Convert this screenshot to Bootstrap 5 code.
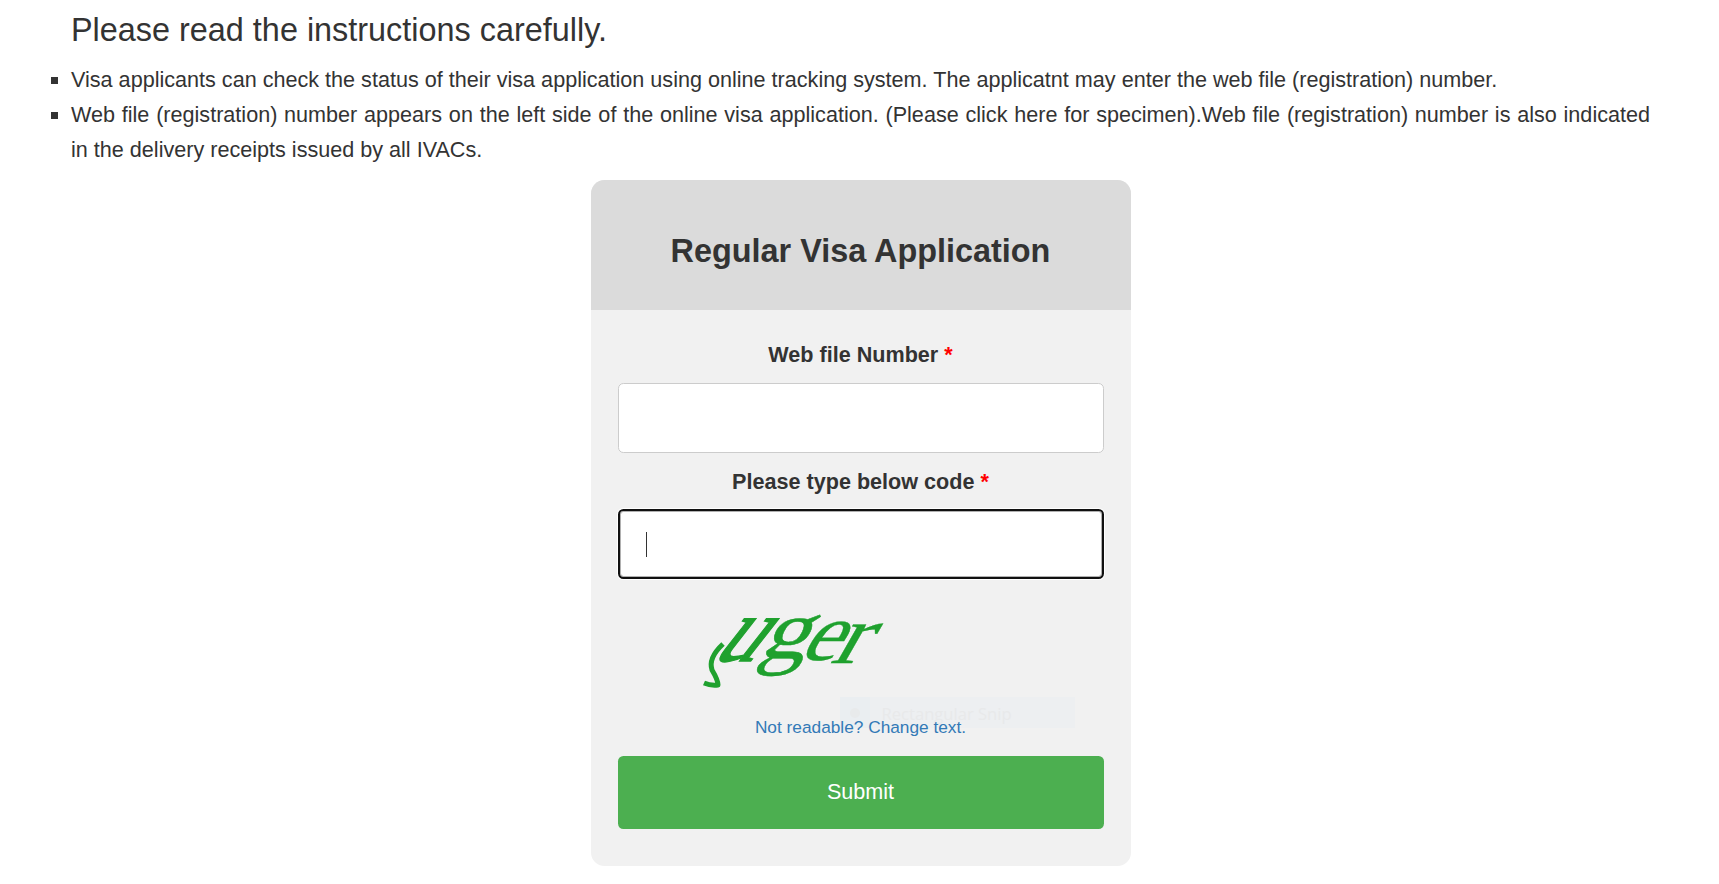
<!DOCTYPE html>
<html lang="en">
<head>
    <meta charset="UTF-8">
    <meta name="viewport" content="width=device-width, initial-scale=1.0">
    <title>Regular Visa Application</title>
    <link href="https://cdn.jsdelivr.net/npm/bootstrap@5.3.0/dist/css/bootstrap.min.css" rel="stylesheet">
    <style>
        body {
            font-family: "Liberation Sans", Arial, sans-serif;
            font-size: 21.6px;
            line-height: 35px;
            color: #333;
            background: #fff;
        }
        .page-wrap {
            padding: 12px 69px 0 71px;
        }
        .page-title {
            font-size: 32.4px;
            line-height: 36px;
            font-weight: 400;
            margin-bottom: 14px;
        }
        .instructions {
            list-style: square;
            text-align: justify;
            margin-bottom: 13px;
        }
        .visa-card {
            width: 540px;
            height: 686px;
            border: 0;
            border-radius: 13.5px;
            background: #f1f1f1;
            color: #333;
        }
        .visa-header {
            height: 130px;
            padding-top: 12px;
            border-radius: 13.5px 13.5px 0 0;
            background: #dbdbdb;
        }
        .visa-header h2 {
            font-size: 32.4px;
            font-weight: 700;
        }
        .visa-body {
            padding: 27px;
        }
        .field-label {
            font-weight: 700;
            margin-bottom: 11px;
        }
        .code-label {
            margin: 11px 0 10px;
        }
        .req {
            color: #f00;
        }
        .visa-input {
            height: 70px;
            padding: 16px 27px;
            font-size: 21.6px;
            border: 1px solid #ccc;
            border-radius: 5.4px;
            background: #fff;
        }
        .visa-input.active {
            border: 2px solid #101010;
            box-shadow: 0 0 0 1px #fff, inset 0 0 0 1px #b0b0b0;
        }
        .caret {
            left: 28px;
            top: 23px;
            width: 1px;
            height: 25px;
            background: #333;
        }
        .captcha {
            height: 120px;
            margin: 11px 0 0 62px;
            overflow: visible;
        }
        .captcha text {
            font-family: "Liberation Serif", serif;
            fill: #1fa12e;
            stroke: #1fa12e;
        }
        .change-text {
            font-size: 17.28px;
            line-height: 24px;
            margin-top: 5px;
            color: #337ab7;
        }
        .snip-ghost {
            left: 249px;
            top: 517px;
            width: 235px;
            height: 31px;
            background: #edeff1;
            font-family: "Open Sans", sans-serif;
            font-size: 16.6px;
            line-height: 33px;
            color: #e8e9ea;
        }
        .snip-icon {
            width: 30px;
            background: #eaeef1;
        }
        .snip-dot {
            width: 10px;
            height: 10px;
            border-radius: 50%;
            background: #e8eaeb;
        }
        .btn-submit {
            height: 73px;
            margin-top: 17px;
            font-size: 21.6px;
            color: #fff;
            border: 0;
            border-radius: 5.4px;
            background: #4caf50;
        }
    </style>
</head>
<body>
    <div class="page-wrap">
        <h3 class="page-title">Please read the instructions carefully.</h3>
        <ul class="instructions ps-0">
            <li>Visa applicants can check the status of their visa application using online tracking system. The applicatnt may enter the web file (registration) number.</li>
            <li>Web file (registration) number appears on the left side of the online visa application. (Please click here for specimen).Web file (registration) number is also indicated in the delivery receipts issued by all IVACs.</li>
        </ul>

        <div class="card visa-card mx-auto text-center position-relative">
            <div class="visa-header d-flex align-items-center justify-content-center">
                <h2 class="mb-0">Regular Visa Application</h2>
            </div>

            <!-- leftover menu entry behind the link -->
            <div class="snip-ghost position-absolute d-flex">
                <div class="snip-icon d-flex align-items-center justify-content-center"><span class="snip-dot"></span></div>
                <span class="ms-2 ps-1">Rectangular Snip</span>
            </div>

            <form class="visa-body d-flex flex-column">
                <label class="field-label" for="webfile">Web file Number <span class="req">*</span></label>
                <input type="text" id="webfile" class="form-control visa-input">

                <label class="field-label code-label" for="code">Please type below code <span class="req">*</span></label>
                <div class="position-relative">
                    <input type="text" id="code" class="form-control visa-input active">
                    <span class="caret position-absolute"></span>
                </div>

                <!-- warped letters, with a swash under the first one -->
                <svg class="captcha" width="230" height="120" viewBox="0 0 230 120" role="img" aria-label="captcha">
                    <path d="M43 54Q28 68 32 80Q38 90 38 95Q31 96 24 93" fill="none" stroke="#1fa12e" stroke-width="5" stroke-linejoin="round"/>
                    <text transform="translate(30 71) skewX(-38) scale(.92 1)" font-size="92" stroke-width="1.5">u</text>
                    <text transform="translate(78 68) skewX(-25) scale(1.12 1)" font-size="84" stroke-width=".5">g</text>
                    <text transform="translate(117 70) skewX(-32) scale(1.05 1)" font-size="82" stroke-width=".3">e</text>
                    <text transform="translate(149 73) skewX(-30) scale(1.15 1)" font-size="84" stroke-width=".3">r</text>
                </svg>

                <a href="#" class="change-text text-decoration-none position-relative">Not readable? Change text.</a>
                <button type="button" class="btn btn-submit w-100">Submit</button>
            </form>
        </div>
    </div>
    <script src="https://cdn.jsdelivr.net/npm/bootstrap@5.3.0/dist/js/bootstrap.bundle.min.js"></script>
</body>
</html>
